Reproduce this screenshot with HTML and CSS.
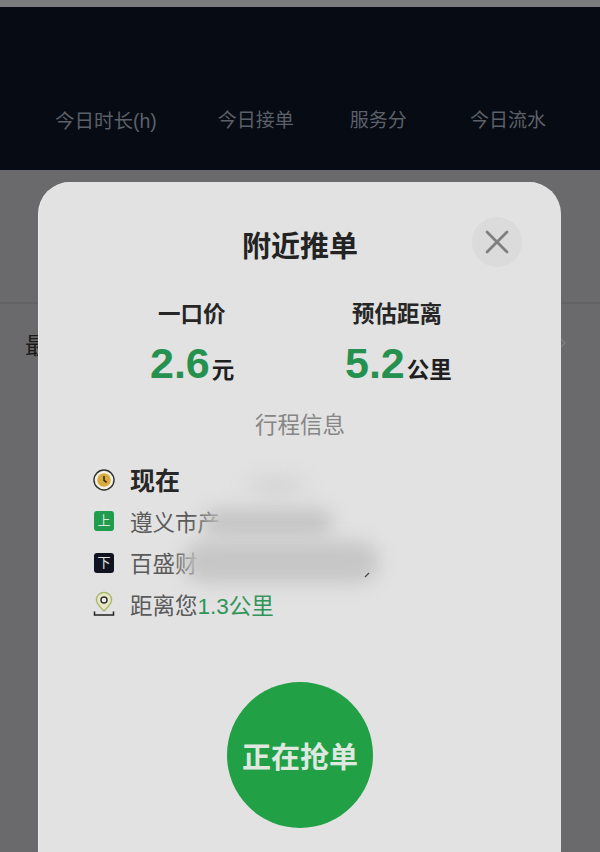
FILE: index.html
```html
<!DOCTYPE html>
<html lang="zh">
<head>
<meta charset="utf-8">
<title>附近推单</title>
<link rel="stylesheet" href="styles.css">
</head>
<body>
<div class="page">
  <div class="strip"></div>
  <header class="header">
    <span class="stat stat-a">今日时长(h)</span>
    <span class="stat stat-b">今日接单</span>
    <span class="stat stat-c">服务分</span>
    <span class="stat stat-d">今日流水</span>
  </header>
  <section class="behind">
    <span class="behind-title">最</span>
    <svg class="behind-arrow" width="8" height="14" viewBox="0 0 8 14"><path d="M1 1l6 6-6 6" fill="none" stroke="#7c7c7c" stroke-width="1.5"/></svg>
  </section>

  <div class="modal">
    <div class="modal-head">
      <h1 class="title">附近推单</h1>
      <button class="close" aria-label="关闭">
        <svg width="24" height="24" viewBox="0 0 24 24"><path d="M2 2l20 20M22 2L2 22" stroke="#7f7f7f" stroke-width="2.8" stroke-linecap="round"/></svg>
      </button>
    </div>
    <div class="metrics">
      <div class="metric metric-price">
        <div class="metric-label">一口价</div>
        <div class="metric-value"><b class="num">2.6</b><span class="unit">元</span></div>
      </div>
      <div class="metric metric-dist">
        <div class="metric-label">预估距离</div>
        <div class="metric-value"><b class="num">5.2</b><span class="unit">公里</span></div>
      </div>
    </div>
    <div class="subhead">行程信息</div>
    <ul class="trip">
      <li class="trip-row trip-now">
        <svg class="ico" width="22" height="22" viewBox="0 0 22 22"><circle cx="11" cy="11" r="10" fill="#f4f1e4" stroke="#2d2d2d" stroke-width="1.4"/><circle cx="11" cy="11" r="6.8" fill="#d8ab3e"/><path d="M11 7v4.4l2.6 2" fill="none" stroke="#2c2514" stroke-width="1.5"/></svg>
        <span>现在</span>
      </li>
      <li class="trip-row">
        <span class="tag tag-up">上</span>
        <span>遵义市产</span>
      </li>
      <li class="trip-row">
        <span class="tag tag-down">下</span>
        <span>百盛财</span>
      </li>
      <li class="trip-row">
        <svg class="ico" width="22" height="26" viewBox="0 0 22 26"><path d="M11 1.5c-4.6 0-7.6 3.300-7.600 7.300 0 4.500 4.600 8.200 7.600 11.200 3-3 7.600-6.700 7.600-11.200 0-4-3-7.300-7.600-7.300z" fill="#e9e8c4" stroke="#a9b873" stroke-width="1.4"/><circle cx="11" cy="9" r="3" fill="#f2f2f2" stroke="#333" stroke-width="1.5"/><path d="M1.500 20.500v3.500h19v-3.500" fill="none" stroke="#222" stroke-width="1.500"/></svg>
        <span>距离您<em class="km">1.3公里</em></span>
      </li>
    </ul>
    <div class="blob blob-a"></div>
    <div class="blob blob-b"></div>
    <div class="blob blob-c"></div>
    <svg class="tick" width="6" height="6" viewBox="0 0 6 6"><path d="M1 5l4-4" stroke="#4a4a4a" stroke-width="1.200"/></svg>
    <button class="grab">正在抢单</button>
  </div>
</div>
</body>
</html>
```

FILE: styles.css
```css
* { box-sizing: border-box; }
html, body { margin: 0; padding: 0; }
body {
  width: 600px;
  height: 852px;
  overflow: hidden;
  font-family: "Liberation Sans", "Noto Sans CJK SC", sans-serif;
}
.page {
  position: relative;
  width: 600px;
  height: 852px;
  overflow: hidden;
  background: #6a6a6c;
}
.strip {
  height: 7px;
  background: #7b7c7e;
}
.header {
  position: relative;
  height: 163px;
  background: #060b14;
  display: flex;
  align-items: flex-start;
  padding: 101px 0 0 55px;
}
.stat {
  font-size: 19px;
  line-height: 26px;
  color: #5c6068;
  white-space: nowrap;
}
.stat-a { font-size: 19.5px; }
.stat-b { margin-left: 61px; }
.stat-c { margin-left: 56px; }
.stat-d { margin-left: 63px; }
.behind {
  height: 134px;
  border-bottom: 2px solid #636365;
  position: relative;
}
.behind-title {
  position: absolute;
  left: 25px;
  top: 161px;
  font-size: 23px;
  line-height: 30px;
  color: #1a1a1a;
}
.behind-arrow {
  position: absolute;
  left: 558px;
  top: 166px;
}
.modal {
  position: absolute;
  left: 39px;
  top: 182px;
  width: 522px;
  height: 700px;
  background: #e2e2e2;
  border-radius: 32px;
  box-shadow: -1px 0 0 #ececec;
}
.modal-head {
  position: relative;
  height: 63px;
  padding-top: 46px;
  margin: 0;
}
.title {
  margin: 0;
  font-size: 29px;
  line-height: 38px;
  font-weight: 700;
  text-align: center;
  color: #232323;
}
.close {
  position: absolute;
  left: 433px;
  top: 35px;
  width: 50px;
  height: 50px;
  padding: 0;
  border: 0;
  border-radius: 50%;
  background: #dbdbdb;
  display: flex;
  align-items: center;
  justify-content: center;
}
.metrics {
  position: relative;
  margin-top: 56px;
  height: 74px;
  display: flex;
}
.metric { position: absolute; top: 0; }
.metric-price { left: 111px; }
.metric-dist { left: 306px; }
.metric-label {
  font-size: 22.5px;
  line-height: 28px;
  font-weight: 700;
  color: #262626;
  white-space: nowrap;
}
.metric-price .metric-label { margin-left: 8px; }
.metric-dist .metric-label { margin-left: 7px; }
.metric-value {
  display: flex;
  align-items: baseline;
  gap: 2px;
  margin-top: 12px;
  white-space: nowrap;
}
.num {
  font-size: 43px;
  line-height: 44px;
  font-weight: 700;
  color: #25914f;
}
.unit {
  font-size: 22.5px;
  line-height: 24px;
  font-weight: 700;
  color: #1f1f1f;
}
.subhead {
  margin-top: 36px;
  text-align: center;
  font-size: 22.5px;
  line-height: 30px;
  color: #868686;
}
.trip {
  list-style: none;
  margin: 17px 0 0;
  padding: 0 0 0 54px;
}
.trip-row {
  position: relative;
  height: 41.700px;
  display: flex;
  align-items: center;
  gap: 15px;
  font-size: 22.5px;
  color: #5a5a5a;
  white-space: nowrap;
}
.trip-now {
  font-size: 25px;
  font-weight: 700;
  color: #272727;
}
.ico {
  flex: none;
  width: 22px;
}
.trip-now .ico { margin-top: 3px; }
.tag {
  flex: none;
  width: 20px;
  height: 20px;
  margin: 1px 1px 0;
  border-radius: 3px;
  font-size: 13px;
  line-height: 20px;
  text-align: center;
  color: #d8e8dc;
}
.tag-up { background: #1f9c4c; }
.tag-down { background: #0f1420; color: #e3e3e3; }
.km {
  font-style: normal;
  color: #2f9458;
}
.blob {
  position: absolute;
  background: #c6c6c6;
  border-radius: 50%;
  filter: blur(9px);
}
.blob-a {
  left: 206px;
  top: 292px;
  width: 62px;
  height: 22px;
  background: #d6d6d6;
}
.blob-b {
  left: 164px;
  top: 326px;
  width: 130px;
  height: 30px;
  border-radius: 15px;
}
.blob-c {
  left: 144px;
  top: 359px;
  width: 196px;
  height: 42px;
  border-radius: 21px;
}
.tick {
  position: absolute;
  left: 325px;
  top: 390px;
}
.grab {
  position: absolute;
  left: 188px;
  top: 500px;
  width: 146px;
  height: 146px;
  padding: 0;
  border: 0;
  border-radius: 50%;
  background: #21a045;
  color: #dfe8e0;
  font-family: inherit;
  font-size: 29px;
  font-weight: 700;
}
```
